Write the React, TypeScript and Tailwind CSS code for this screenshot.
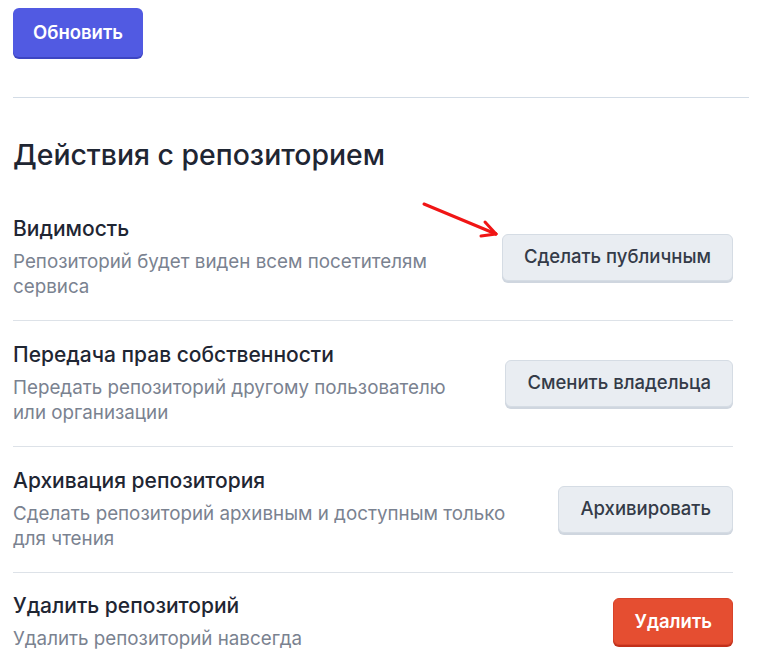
const rows = [
  {
    title: 'Видимость',
    desc: 'Репозиторий будет виден всем посетителям сервиса',
    action: 'Сделать публичным',
    danger: false,
  },
  {
    title: 'Передача прав собственности',
    desc: 'Передать репозиторий другому пользователю или организации',
    action: 'Сменить владельца',
    danger: false,
  },
  {
    title: 'Архивация репозитория',
    desc: 'Сделать репозиторий архивным и доступным только для чтения',
    action: 'Архивировать',
    danger: false,
  },
  {
    title: 'Удалить репозиторий',
    desc: 'Удалить репозиторий навсегда',
    action: 'Удалить',
    danger: true,
  },
];

export default function App() {
  return (
    <div className="relative min-h-[657px] bg-white pl-[13px] pt-2 font-['Inter','Noto_Sans',sans-serif]">
      <button className="h-[49px] rounded-md bg-[#515ae2] px-5 text-[18.5px] font-semibold text-white shadow-[0_2px_0_#3d45c2]">
        Обновить
      </button>

      <div className="mt-[40px] w-[736px] border-t border-[#d3dce6]" />

      <h2 className="mt-[38px] text-[28.4px] font-medium leading-[38px] text-[#1f2633]">
        Действия с репозиторием
      </h2>

      <div className="mt-[21px] w-[720px]">
        {rows.map((r, i) => (
          <div
            key={r.title}
            className={
              'flex items-center justify-between gap-10 ' +
              (i < rows.length - 1 ? 'border-b border-[#dde2e8] pb-[21px] pt-[20px]' : 'pt-[19px]')
            }
          >
            <div className="min-w-0 flex-1">
              <div className="text-[21px] font-medium leading-[28px] text-[#1f2633]">{r.title}</div>
              <p className="mt-[6px] text-[18.8px] leading-[25px] text-[#7a8290]">{r.desc}</p>
            </div>
            <button
              className={
                r.danger
                  ? 'h-[47px] shrink-0 rounded-md border border-[#d8432a] bg-[#e54e31] px-5 text-[18.5px] font-semibold text-white shadow-[0_2px_0_#c2301a]'
                  : 'h-[47px] shrink-0 rounded-md border border-[#d5dce4] bg-[#e9edf2] px-[21px] text-[18.5px] font-medium text-[#343b48] shadow-[0_2px_0_#cfd6df]'
              }
            >
              {r.action}
            </button>
          </div>
        ))}
      </div>

      <svg className="absolute left-[420px] top-[200px]" width="90" height="45" viewBox="0 0 90 45">
        <g stroke="#f01515" strokeWidth="3" fill="none" strokeLinecap="round">
          <line x1="4" y1="4" x2="76" y2="34" />
          <line x1="76" y1="34" x2="65" y2="22" />
          <line x1="76" y1="34" x2="61" y2="36" />
        </g>
      </svg>
    </div>
  );
}
